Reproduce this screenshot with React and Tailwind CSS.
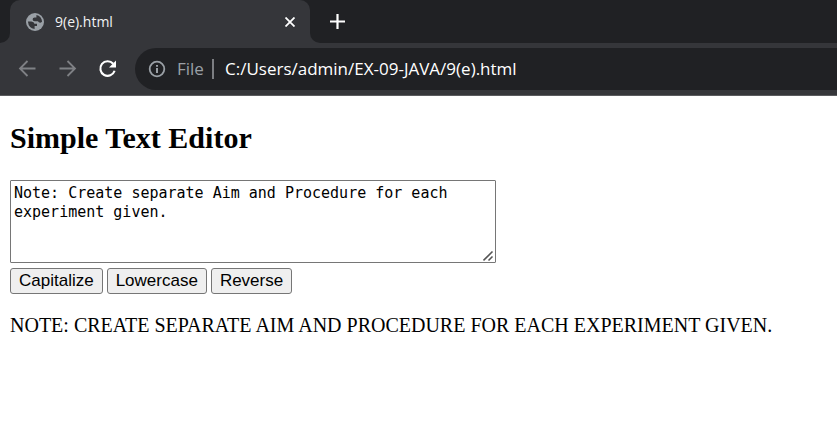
import { useState } from "react";

function GlobeIcon() {
  return (
    <svg className="size-[18px] shrink-0" viewBox="0 0 18 18" aria-hidden="true">
      <circle cx="9" cy="9" r="9" fill="#9aa0a6" />
      <path
        d="M1.9 8.4 H5.4 Q8.2 8.6 8.4 10.8 H11 V13 H8.6 V15.9 Q2.6 15.2 1.9 8.4Z M10.4 2 Q15.6 3.2 16.1 8.6 Q15.4 10.2 13.4 9.6 Q12.4 9.2 12 8.3 H8.8 Q6.6 8 6.6 6.2 Q6.6 4.6 8.6 4.4 H10.4Z"
        fill="#35363a"
      />
    </svg>
  );
}

function BackIcon() {
  return (
    <svg className="size-5" viewBox="0 0 20 20" fill="none" stroke="currentColor" strokeWidth="1.8" aria-hidden="true">
      <path d="M18.5 9.5H4M10.5 2L3 9.5L10.5 17" />
    </svg>
  );
}

function ForwardIcon() {
  return (
    <svg className="size-5" viewBox="0 0 20 20" fill="none" stroke="currentColor" strokeWidth="1.8" aria-hidden="true">
      <path d="M2.5 9.5H17M10.5 2L18 9.5L10.5 17" />
    </svg>
  );
}

function ReloadIcon() {
  return (
    <svg className="size-5" viewBox="0 0 20 20" aria-hidden="true">
      <path d="M16.2 4.8A7.3 7.3 0 1 0 17.6 11.8" fill="none" stroke="currentColor" strokeWidth="2.1" />
      <path d="M19 1.4V8.4H12Z" fill="currentColor" />
    </svg>
  );
}

function InfoIcon() {
  return (
    <svg className="size-[18px]" viewBox="0 0 18 18" aria-hidden="true">
      <circle cx="9" cy="9" r="7.3" fill="none" stroke="currentColor" strokeWidth="1.8" />
      <path d="M8 8H10V13H8ZM8 5H10V6.8H8Z" fill="currentColor" />
    </svg>
  );
}

function TabStrip() {
  return (
    <div className="flex h-[43px]">
      <div className="w-[10px] rounded-br-[10px] bg-[#202124]" />
      <div className="w-[300px] bg-linear-to-b from-[#202124] from-50% to-[#35363a] to-50%">
        <div className="flex h-full items-center rounded-t-[10px] bg-[#35363a] pr-3 pl-4">
          <GlobeIcon />
          <span className="ml-[11px] flex-1 font-['Open_Sans','Noto_Sans',sans-serif] text-sm text-[#f1f3f4]">9(e).html</span>
          <button type="button" aria-label="Close tab" className="p-[3px] text-white">
            <svg className="size-[10px]" viewBox="0 0 10 10" stroke="currentColor" strokeWidth="1.8" aria-hidden="true">
              <path d="M0.5 0.5L9.5 9.5M9.5 0.5L0.5 9.5" />
            </svg>
          </button>
        </div>
      </div>
      <div className="flex flex-1 items-center rounded-bl-[10px] bg-[#202124] pl-5">
        <button type="button" aria-label="New tab" className="text-white">
          <svg className="size-[15px]" viewBox="0 0 15 15" stroke="currentColor" strokeWidth="2.2" aria-hidden="true">
            <path d="M7.5 0V15M0 7.5H15" />
          </svg>
        </button>
      </div>
    </div>
  );
}

function Toolbar() {
  const [url, setUrl] = useState("C:/Users/admin/EX-09-JAVA/9(e).html");
  return (
    <div className="flex h-[53px] items-center border-b border-[#5a5b5e] pl-[17px]">
      <div className="flex gap-5 text-[#7f8185]">
        <button type="button" aria-label="Back"><BackIcon /></button>
        <button type="button" aria-label="Forward"><ForwardIcon /></button>
        <button type="button" aria-label="Reload" className="text-white"><ReloadIcon /></button>
      </div>
      <div className="ml-[18px] flex h-[42px] flex-1 items-center rounded-l-full bg-[#202124] pl-[13px] font-['Open_Sans','Noto_Sans',sans-serif] text-[17px] text-[#9aa0a6]">
        <InfoIcon />
        <span className="ml-[11px] w-[35px]">File</span>
        <span className="h-5 w-[2px] bg-[#7c7e82]" />
        <input
          aria-label="Address"
          value={url}
          onChange={(e) => setUrl(e.target.value)}
          className="ml-[11px] min-w-0 flex-1 bg-transparent text-white outline-none"
        />
      </div>
    </div>
  );
}

const buttonClass =
  "h-[26px] rounded-[3px] border border-[#767676] bg-[#efefef] px-2 font-['Liberation_Sans',Arial,sans-serif] text-[17px] leading-5 text-black";

export default function App() {
  const [text, setText] = useState("Note: Create separate Aim and Procedure for each experiment given.");
  const [output, setOutput] = useState("NOTE: CREATE SEPARATE AIM AND PROCEDURE FOR EACH EXPERIMENT GIVEN.");
  return (
    <div className="min-h-screen bg-white">
      <header className="bg-[#35363a]">
        <TabStrip />
        <Toolbar />
      </header>
      <main className="px-[10px] pt-6 font-['Liberation_Serif','Times_New_Roman',serif] text-xl leading-6 text-black">
        <h2 className="text-[30px] leading-9 font-bold">Simple Text Editor</h2>
        <div className="relative mt-6 w-fit max-w-full">
          <textarea
            aria-label="Text"
            value={text}
            onChange={(e) => setText(e.target.value)}
            className="block h-[83px] w-[486px] max-w-full resize rounded-[1px] border border-[#767676] bg-white p-[3px] font-['DejaVu_Sans_Mono',monospace] text-[15px] leading-[19px] outline-none"
          />
          <svg className="pointer-events-none absolute right-px bottom-px size-3" viewBox="0 0 12 12" aria-hidden="true">
            <path d="M0 0H12V12H0Z" fill="#fff" />
            <path d="M0.5 10.5L9.5 1.5M5.5 10.5L9.5 6.5" stroke="#555" strokeWidth="1.6" />
          </svg>
        </div>
        <div className="mt-[5px] flex gap-1">
          <button type="button" className={buttonClass} onClick={() => setOutput(text.toUpperCase())}>Capitalize</button>
          <button type="button" className={buttonClass} onClick={() => setOutput(text.toLowerCase())}>Lowercase</button>
          <button type="button" className={buttonClass} onClick={() => setOutput([...text].reverse().join(""))}>Reverse</button>
        </div>
        <p className="mt-[19px]">{output}</p>
      </main>
    </div>
  );
}
